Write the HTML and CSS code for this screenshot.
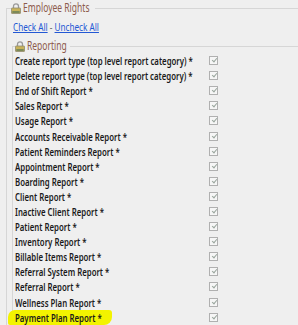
FILE: index.html
```html
<!DOCTYPE html>
<html>
<head>
  <title>Employee Rights</title>
  <link rel="stylesheet" href="styles.css">
</head>
<body>

  <fieldset class="group">
    <legend class="group-title">
      <svg class="lock" width="10" height="11" viewBox="0 0 10 11">
        <path d="M2.5 5V3.3a2.5 2.5 0 0 1 5 0V5" fill="none" stroke="#9a9a9a" stroke-width="1.3"/>
        <rect x="0.5" y="5" width="9" height="5.5" rx="0.5" fill="#c9b35a" stroke="#8f8a70" stroke-width="0.8"/>
        <rect x="1.3" y="8" width="7.4" height="2" fill="#7c8a58"/>
      </svg>
      <span class="squeeze">Employee Rights</span>
    </legend>

    <p class="links"><span class="squeeze"><a href="#">Check All</a> - <a href="#">Uncheck All</a></span></p>

    <fieldset class="group inner">
      <legend class="group-title">
        <svg class="lock" width="10" height="11" viewBox="0 0 10 11">
          <path d="M2.5 5V3.3a2.5 2.5 0 0 1 5 0V5" fill="none" stroke="#9a9a9a" stroke-width="1.3"/>
          <rect x="0.5" y="5" width="9" height="5.5" rx="0.5" fill="#c9b35a" stroke="#8f8a70" stroke-width="0.8"/>
          <rect x="1.3" y="8" width="7.4" height="2" fill="#7c8a58"/>
        </svg>
        <span class="squeeze">Reporting</span>
      </legend>

      <div class="rights">
        <label><span class="squeeze">Create report type (top level report category) *</span></label><span class="box"></span>
        <label><span class="squeeze">Delete report type (top level report category) *</span></label><span class="box"></span>
        <label><span class="squeeze">End of Shift Report *</span></label><span class="box"></span>
        <label><span class="squeeze">Sales Report *</span></label><span class="box"></span>
        <label><span class="squeeze">Usage Report *</span></label><span class="box"></span>
        <label><span class="squeeze">Accounts Receivable Report *</span></label><span class="box"></span>
        <label><span class="squeeze">Patient Reminders Report *</span></label><span class="box"></span>
        <label><span class="squeeze">Appointment Report *</span></label><span class="box"></span>
        <label><span class="squeeze">Boarding Report *</span></label><span class="box"></span>
        <label><span class="squeeze">Client Report *</span></label><span class="box"></span>
        <label><span class="squeeze">Inactive Client Report *</span></label><span class="box"></span>
        <label><span class="squeeze">Patient Report *</span></label><span class="box"></span>
        <label><span class="squeeze">Inventory Report *</span></label><span class="box"></span>
        <label><span class="squeeze">Billable Items Report *</span></label><span class="box"></span>
        <label><span class="squeeze">Referral System Report *</span></label><span class="box"></span>
        <label><span class="squeeze">Referral Report *</span></label><span class="box"></span>
        <label><span class="squeeze">Wellness Plan Report *</span></label><span class="box"></span>
        <label class="marked"><span class="squeeze">Payment Plan Report *</span></label><span class="box"></span>
      </div>
    </fieldset>
  </fieldset>

</body>
</html>
```

FILE: styles.css
```css
body {
  margin: 0;
  background-color: #efefef;
  font-family: "Noto Sans", "Open Sans", sans-serif;
  color: #1a1a1a;
  overflow: hidden;
}

/* text in the source is narrow, like a squeezed screenshot */
.squeeze {
  display: inline-block;
  white-space: nowrap;
  transform: scaleX(0.71);
  transform-origin: left center;
}

.group {
  margin: 1px 0 0 6px;
  padding: 0 0 0 4px;
  border: 1px solid #d6d6d6;
  border-right: none;
  border-bottom: none;
  min-width: 0;
}

.group-title {
  padding: 0;
  font-size: 12px;
  line-height: 14px;
  color: #8d5b4c;
  display: flex;
  align-items: center;
  gap: 2px;
  width: 84px;
}

.lock {
  display: block;
  flex-shrink: 0;
  margin-top: 1px;
}

.links {
  margin: 5px 0 0 2px;
  font-size: 11.5px;
  line-height: 14px;
  color: #666;
}

.links a {
  color: #2358d4;
}

.inner {
  margin: 5px 0 0 1px;
  padding-left: 2px;
}

.inner .group-title {
  width: 55px;
}

.rights {
  display: grid;
  grid-template-columns: 194px 9px;
  grid-auto-rows: 15.1px;
  align-items: center;
  padding-top: 0;
}

.rights label {
  font-size: 11px;
  font-weight: 600;
  line-height: 15px;
  white-space: nowrap;
}

.box {
  width: 9px;
  height: 9px;
  box-sizing: border-box;
  border: 1px solid #b0b0b0;
  background-color: #f6f6f6;
  position: relative;
}

.box::after {
  content: "";
  position: absolute;
  left: 2.5px;
  top: 0;
  width: 2px;
  height: 4px;
  border: solid #9aa69e;
  border-width: 0 1px 1px 0;
  transform: rotate(40deg);
}

.marked {
  justify-self: start;
  width: 104px;
  box-sizing: border-box;
  margin-left: -7px;
  padding-left: 7px;
  background-color: #f3f300;
  border-radius: 7px 3px 8px 2px;
}
```
